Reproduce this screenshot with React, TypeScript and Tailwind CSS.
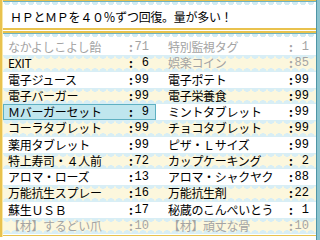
import React from "react";

type Item = { name: string; count: string; dim?: boolean };

const rows: [Item, Item][] = [
  [{ name: "なかよしこよし飴", count: "71", dim: true }, { name: "特別監視タグ", count: "1", dim: true }],
  [{ name: "EXIT", count: "6" }, { name: "娯楽コイン", count: "85", dim: true }],
  [{ name: "電子ジュース", count: "99" }, { name: "電子ポテト", count: "99" }],
  [{ name: "電子バーガー", count: "99" }, { name: "電子栄養食", count: "99" }],
  [{ name: "Ｍバーガーセット", count: "9" }, { name: "ミントタブレット", count: "99" }],
  [{ name: "コーラタブレット", count: "99" }, { name: "チョコタブレット", count: "99" }],
  [{ name: "薬用タブレット", count: "99" }, { name: "ピザ・Ｌサイズ", count: "99" }],
  [{ name: "特上寿司・４人前", count: "72" }, { name: "カップケーキング", count: "2" }],
  [{ name: "アロマ・ローズ", count: "13" }, { name: "アロマ・シャクヤク", count: "88" }],
  [{ name: "万能抗生スプレー", count: "16" }, { name: "万能抗生剤", count: "22" }],
  [{ name: "蘇生ＵＳＢ", count: "17" }, { name: "秘蔵のこんぺいとう", count: "1" }],
  [{ name: "【材】するどい爪", count: "10", dim: true }, { name: "【材】頑丈な骨", count: "10", dim: true }],
];

function Cell({ item, selected }: { item: Item; selected?: boolean }) {
  const color = item.dim ? "text-[#a4a4a4]" : "text-black";
  return (
    <div
      className={
        "flex items-center h-full w-[153px] pl-[4px] pr-[6px] " +
        (selected ? "bg-[#bfe6ee] border border-[#5fb0c2]" : "border border-transparent")
      }
    >
      <span className={"flex-1 whitespace-nowrap tracking-[-0.3px] " + color}>{item.name}</span>
      <span className={"w-[20px] flex justify-between " + color}>
        <span className="font-bold">:</span>
        <span className="font-['Liberation_Mono',monospace] text-[12px]">{item.count}</span>
      </span>
    </div>
  );
}

export default function App() {
  return (
    <div className="w-[320px] h-[240px] bg-white overflow-hidden flex text-[12px] leading-none font-['Noto_Sans_CJK_JP',sans-serif]">
      <div className="w-[3px] h-[237px] flex">
        <div className="w-[2px] bg-[#e9c24e]" />
        <div className="w-[1px] bg-[#f7e7a8]" />
      </div>
      <div className="flex-1 flex flex-col">
        <div className="h-[1px] bg-[#e9c24e]" />
        <div className="h-[1px] bg-[#6fb2c0]" />
        <div className="h-[3px] bg-[radial-gradient(circle_at_50%_0%,#d3ebf3_3px,transparent_3.5px)] bg-[length:8px_100%]" />
        <div className="h-[23px] flex items-center pl-[7px] tracking-[-0.3px] text-black">
          ＨＰとＭＰを４０％ずつ回復。量が多い！
        </div>
        <div className="h-[2px] bg-[#e9c24e]" />
        <div className="h-[1px] bg-white" />
        <div className="h-[2px] bg-[#e9c24e]" />
        <div className="h-[1px] bg-[#6fb2c0]" />
        <div className="h-[5px] bg-[radial-gradient(circle_at_50%_0%,#d3ebf3_3px,transparent_3.5px)] bg-[length:8px_100%]" />
        {rows.map((r, i) => (
          <div
            key={i}
            className={
              "h-[16.25px] flex justify-between " +
              (i % 2 === 1
                ? "bg-[radial-gradient(ellipse_4px_4px_at_50%_0%,#d8eef5_90%,transparent_100%),radial-gradient(ellipse_4px_4px_at_50%_100%,#d8eef5_90%,transparent_100%),linear-gradient(#fcf7dd,#fcf7dd)] bg-[length:8px_100%]"
                : "bg-white")
            }
          >
            <Cell item={r[0]} selected={i === 4} />
            <Cell item={r[1]} />
          </div>
        ))}
        <div className="h-[1px] bg-white" />
        <div className="h-[1px] bg-[#e9c24e]" />
      </div>
      <div className="w-[4px] flex">
        <div className="w-[1px] bg-[#4f95a6]" />
        <div className="w-[3px] bg-[#8cc4cf]" />
      </div>
    </div>
  );
}
